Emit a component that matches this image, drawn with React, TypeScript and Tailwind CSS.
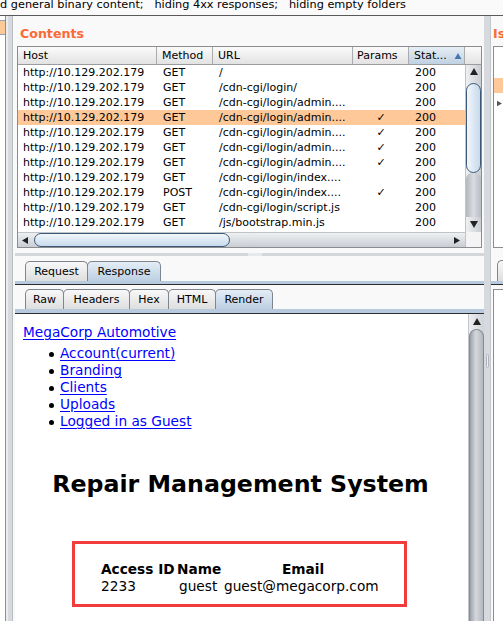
import React from 'react';

const rows: { m: string; u: string; p: boolean; sel?: boolean }[] = [
  { m: 'GET', u: '/', p: false },
  { m: 'GET', u: '/cdn-cgi/login/', p: false },
  { m: 'GET', u: '/cdn-cgi/login/admin....', p: false },
  { m: 'GET', u: '/cdn-cgi/login/admin....', p: true, sel: true },
  { m: 'GET', u: '/cdn-cgi/login/admin....', p: true },
  { m: 'GET', u: '/cdn-cgi/login/admin....', p: true },
  { m: 'GET', u: '/cdn-cgi/login/admin....', p: true },
  { m: 'GET', u: '/cdn-cgi/login/index....', p: false },
  { m: 'POST', u: '/cdn-cgi/login/index....', p: true },
  { m: 'GET', u: '/cdn-cgi/login/script.js', p: false },
  { m: 'GET', u: '/js/bootstrap.min.js', p: false },
  { m: 'GET', u: '/js/jquery.min.js', p: false },
];

const Tri = ({ dir, className }: { dir: 'up' | 'down' | 'left' | 'right'; className?: string }) => {
  const pts = {
    up: '4,0 8,7 0,7',
    down: '0,0 8,0 4,7',
    left: '0,4 7,0 7,8',
    right: '0,0 7,4 0,8',
  }[dir];
  const vb = dir === 'up' || dir === 'down' ? '0 0 8 7' : '0 0 7 8';
  return (
    <svg viewBox={vb} className={className}>
      <polygon points={pts} fill="currentColor" />
    </svg>
  );
};

const hdr = 'h-full flex items-center pt-[1px] border-r border-[#a9abae] bg-[linear-gradient(to_bottom,#fbfbfb,#e2e2e2)]';

const Tab = ({ label, w, active }: { label: string; w: string; active?: boolean }) => (
  <div
    className={`${w} h-[20px] -mr-px flex items-center justify-center pt-[1px] border border-b-0 border-[#7f858d] rounded-t-[5px] text-[11px] text-black ${
      active
        ? 'bg-[linear-gradient(to_bottom,#e4edf6,#bccfe2)]'
        : 'bg-[linear-gradient(to_bottom,#f8f8f8,#dedede)]'
    }`}
  >
    {label}
  </div>
);

const Link = ({ children }: { children: React.ReactNode }) => (
  <span className="text-[#0000ff] underline underline-offset-2 decoration-1">{children}</span>
);

export default function App() {
  return (
    <div className="w-[503px] h-[621px] overflow-hidden flex flex-col bg-[#d6d9de] font-['DejaVu_Sans',sans-serif] text-black">
      {/* filter strip */}
      <div className="h-[16px] shrink-0 bg-[#fafafa] border-b border-[#5a5a5a] overflow-hidden">
        <div className="-mt-[1px] leading-[11px] text-[11.3px] whitespace-pre">
          d general binary content;   hiding 4xx responses;   hiding empty folders
        </div>
      </div>

      <div className="flex flex-1 min-h-0">
        {/* left cut panel */}
        <div className="w-[6px] shrink-0 bg-white border-r border-[#8e8e8e] pt-[3px]">
          <div className="h-[15px] mt-[1px] bg-[#ffc898] border-y border-[#8da2bb]" />
        </div>
        <div className="w-[2px] shrink-0 bg-[#ebecee]" />
        <div className="w-[4px] shrink-0 bg-[#d6d9de]" />

        {/* middle panel */}
        <div className="w-[472px] shrink-0 bg-[#f9f9f9] border-l border-[#babdc2] flex flex-col">
          <div className="pl-[7px] pt-[10px] h-[30px] leading-[16px] text-[12.6px] font-bold text-[#fb6a35]">Contents</div>

          {/* table */}
          <div className="ml-[4px] w-[465px] h-[202px] border border-[#8a8c90] flex flex-col bg-white text-[11px]">
            <div className="h-[18px] flex border-b border-[#9a9ca0]">
              <div className={`${hdr} w-[139px] pl-[5px]`}>Host</div>
              <div className={`${hdr} w-[56px] pl-[5px]`}>Method</div>
              <div className={`${hdr} w-[140px] pl-[5px]`}>URL</div>
              <div className={`${hdr} w-[56px] pl-[4px]`}>Params</div>
              <div className="h-full w-[56px] pl-[5px] pt-[1px] flex items-center border-r border-[#a9abae] bg-[linear-gradient(to_bottom,#e7eef5,#bfd1e3)]">
                <span>Stat...</span>
                <Tri dir="up" className="w-[8px] h-[6px] ml-[7px] text-[#4677ae]" />
              </div>
              <div className="h-full flex-1 bg-[linear-gradient(to_bottom,#fbfbfb,#e2e2e2)]" />
            </div>

            <div className="flex flex-1 min-h-0">
              <div className="w-[447px] flex flex-col">
                <div className="h-[167px] overflow-hidden">
                  {rows.map((r, i) => (
                    <div key={i} className={`h-[15px] flex items-center pt-[2px] whitespace-nowrap ${r.sel ? 'bg-[#ffc898]' : ''}`}>
                      <div className="w-[139px] pl-[5px]">http://10.129.202.179</div>
                      <div className="w-[56px] pl-[6px]">{r.m}</div>
                      <div className="w-[140px] pl-[6px] overflow-hidden">{r.u}</div>
                      <div className="w-[56px] text-center">{r.p ? '✓' : ''}</div>
                      <div className="w-[56px] pl-[6px]">200</div>
                    </div>
                  ))}
                </div>
                {/* horizontal scrollbar */}
                <div className="h-[15px] flex items-center bg-[linear-gradient(to_bottom,#eef0f2,#c9cdd3)] border-t border-[#c0c3c8]">
                  <Tri dir="left" className="w-[6px] h-[7px] ml-[4px] text-[#222]" />
                  <div className="ml-[6px] w-[196px] h-[14px] rounded-[8px] border border-[#3b5878] bg-[linear-gradient(to_bottom,#f2f7fb,#c7daec)]" />
                  <div className="flex-1" />
                  <Tri dir="right" className="w-[6px] h-[7px] mr-[5px] text-[#222]" />
                </div>
              </div>
              <div className="w-[16px] flex flex-col border-l border-[#c0c3c8]">
                <div className="h-[167px] flex flex-col items-center bg-[linear-gradient(to_right,#eef0f2,#c9cdd3)]">
                  <Tri dir="up" className="w-[8px] h-[7px] mt-[3px] text-[#222]" />
                  <div className="mt-[8px] w-[15px] h-[90px] rounded-[8px] border border-[#3b5878] bg-[linear-gradient(to_right,#f2f7fb,#c7daec)]" />
                  <div className="flex-1 w-[15px] rounded-t-[6px] bg-[linear-gradient(to_right,#b4b8bf,#d8dbe0_50%,#b9bdc4)]" />
                  <Tri dir="down" className="w-[8px] h-[7px] my-[4px] text-[#222]" />
                </div>
                <div className="flex-1 bg-[#f4f4f4]" />
              </div>
            </div>
          </div>

          {/* splitter */}
          <div className="mt-[5px] ml-[2px] h-[3px] bg-[#d3d6db] flex justify-center">
            <div className="w-[14px] h-full bg-[#e6e8eb] ml-[10px]" />
          </div>

          {/* request / response tabs */}
          <div className="ml-[2px] mt-[5px] flex flex-col">
            <div className="flex pl-[10px]">
              <Tab label="Request" w="w-[63px]" />
              <Tab label="Response" w="w-[74px]" active />
            </div>
            <div className="h-[3px] bg-[#b7cade]" />
            <div className="h-[1px] bg-[#2c2c2c]" />
          </div>

          <div className="ml-[2px] mt-[4px] flex flex-col">
            <div className="flex pl-[10px]">
              <Tab label="Raw" w="w-[39px]" />
              <Tab label="Headers" w="w-[67px]" />
              <Tab label="Hex" w="w-[40px]" />
              <Tab label="HTML" w="w-[48px]" />
              <Tab label="Render" w="w-[58px]" active />
            </div>
            <div className="h-[4px] bg-[#b7cade]" />
            <div className="h-[1px] bg-[#2c2c2c]" />
          </div>

          {/* render area */}
          <div className="ml-[2px] flex flex-1 min-h-0">
            <div className="w-[453px] bg-white pt-[10px] pl-[8px] text-[13.7px] leading-[17px]">
              <div>
                <Link>MegaCorp Automotive </Link>
              </div>
              <div className="mt-[4px] pl-[26px]">
                {['Account(current)', 'Branding', 'Clients', 'Uploads', 'Logged in as Guest'].map((t) => (
                  <div key={t} className="flex items-center h-[17px]">
                    <span className="w-[5px] h-[5px] rounded-full bg-black mr-[6px] mt-[2px]" />
                    <Link>{t}</Link>
                  </div>
                ))}
              </div>
              <div className="mt-[40px] -ml-[10px] text-center font-bold text-[23.7px] leading-[28px]">Repair Management System</div>
              <div className="mt-[43px] -ml-[12px] flex justify-center">
                <div className="w-[335px] border-[3px] border-[#f23b3b] pl-[26px] pt-[17px] pb-[9px]">
                  <div className="flex font-bold">
                    <div className="w-[76px]">Access ID</div>
                    <div className="w-[46px]">Name</div>
                    <div className="w-[160px] text-center">Email</div>
                  </div>
                  <div className="flex">
                    <div className="w-[76px]">2233</div>
                    <div className="w-[47px] pl-[2px]">guest</div>
                    <div className="w-[160px]">guest@megacorp.com</div>
                  </div>
                </div>
              </div>
            </div>
            {/* render scrollbar */}
            <div className="w-[16px] flex flex-col items-center bg-[linear-gradient(to_right,#eceef1,#d0d3d8)] border-l border-[#c4c7cc]">
              <Tri dir="up" className="w-[8px] h-[7px] mt-[4px] text-[#222]" />
              <div className="mt-[4px] w-[15px] flex-1 rounded-t-[8px] border border-b-0 border-[#868b93] bg-[linear-gradient(to_right,#9ca1a9,#d5d8dd_45%,#b3b7be)]" />
            </div>
          </div>
        </div>

        {/* splitter */}
        <div className="w-[6px] shrink-0 bg-[#d6d9de] flex flex-col items-center">
          <div className="mt-[338px] w-[3px] h-[14px] rounded-[2px] border border-[#b0b4ba] bg-[#eceef0]" />
        </div>

        {/* right cut panel */}
        <div className="flex-1 bg-[#f9f9f9] border-l border-[#c4c7cc] flex flex-col overflow-hidden">
          <div className="pl-[2px] pt-[10px] h-[30px] leading-[16px] text-[12.6px] font-bold text-[#fb6a35] whitespace-nowrap">Issues</div>
          <div className="ml-[2px] h-[202px] border border-r-0 border-[#8a8c90] bg-white">
            <div className="mt-[31px] h-[15px] bg-[#ffc898]" />
            <Tri dir="right" className="mt-[7px] ml-[3px] w-[5px] h-[7px] text-[#555]" />
          </div>
          <div className="mt-[12px] h-[25px] flex flex-col">
            <div className="flex-1 pl-[6px]">
              <div className="h-full border-l border-t border-[#7f858d] rounded-tl-[5px] bg-[linear-gradient(to_bottom,#f8f8f8,#dedede)]" />
            </div>
            <div className="h-[3px] bg-[#b7cade]" />
            <div className="h-[1px] bg-[#2c2c2c]" />
          </div>
          <div className="ml-[2px] mt-[4px] flex-1 border-l border-t border-[#8a8c90] bg-white" />
        </div>
      </div>
    </div>
  );
}
